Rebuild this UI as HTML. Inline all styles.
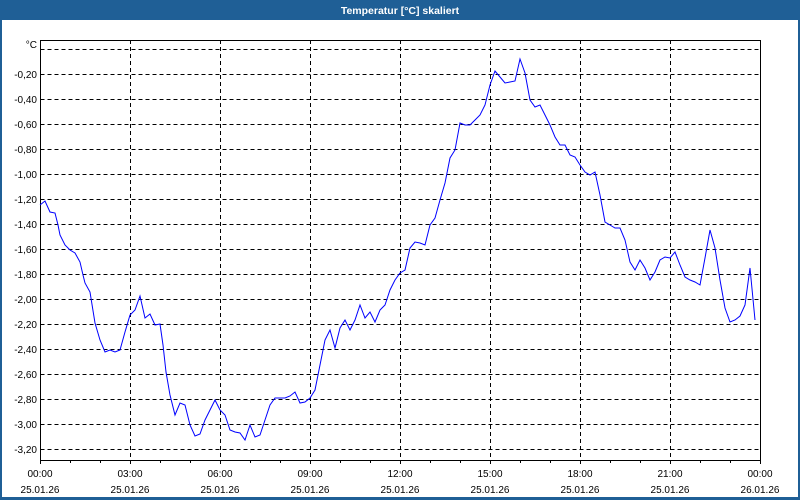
<!DOCTYPE html>
<html><head><meta charset="utf-8"><style>
html,body{margin:0;padding:0;width:800px;height:500px;overflow:hidden;background:#fff}
</style></head><body>
<svg width="800" height="500" xmlns="http://www.w3.org/2000/svg" font-family="Liberation Sans, sans-serif" font-size="10">
<rect x="0" y="0" width="800" height="500" fill="#1f5f96"/>
<rect x="2" y="20" width="796" height="477" fill="#fff"/>
<text x="400" y="14" text-anchor="middle" fill="#fff" font-weight="bold" font-size="10.5">Temperatur [°C] skaliert</text>
<g stroke="#000" stroke-width="1" stroke-dasharray="4,3" fill="none">
<path d="M40.5 49.5H760M40.5 74.5H760M40.5 99.5H760M40.5 124.5H760M40.5 149.5H760M40.5 174.5H760M40.5 199.5H760M40.5 224.5H760M40.5 249.5H760M40.5 274.5H760M40.5 299.5H760M40.5 324.5H760M40.5 349.5H760M40.5 374.5H760M40.5 399.5H760M40.5 424.5H760M40.5 449.5H760"/>
<path d="M130.5 40V460M220.5 40V460M310.5 40V460M400.5 40V460M490.5 40V460M580.5 40V460M670.5 40V460"/>
</g>
<path d="M40.5 40V460.5H760.5V40M40 40.5H760.5" stroke="#000" stroke-width="1" fill="none"/>
<path d="M40.5 460V464M70.5 460V463M100.5 460V463M130.5 460V464M160.5 460V463M190.5 460V463M220.5 460V464M250.5 460V463M280.5 460V463M310.5 460V464M340.5 460V463M370.5 460V463M400.5 460V464M430.5 460V463M460.5 460V463M490.5 460V464M520.5 460V463M550.5 460V463M580.5 460V464M610.5 460V463M640.5 460V463M670.5 460V464M700.5 460V463M730.5 460V463M760.5 460V464" stroke="#000"/>
<g text-anchor="end" fill="#000">
<text x="37" y="48">°C</text>
<text x="37" y="78">-0,20</text><text x="37" y="103">-0,40</text><text x="37" y="128">-0,60</text><text x="37" y="153">-0,80</text><text x="37" y="178">-1,00</text><text x="37" y="203">-1,20</text><text x="37" y="228">-1,40</text><text x="37" y="253">-1,60</text><text x="37" y="278">-1,80</text><text x="37" y="303">-2,00</text><text x="37" y="328">-2,20</text><text x="37" y="353">-2,40</text><text x="37" y="378">-2,60</text><text x="37" y="403">-2,80</text><text x="37" y="428">-3,00</text><text x="37" y="453">-3,20</text>
</g>
<g text-anchor="middle" fill="#000">
<text x="40" y="477">00:00</text><text x="130" y="477">03:00</text><text x="220" y="477">06:00</text><text x="310" y="477">09:00</text><text x="400" y="477">12:00</text><text x="490" y="477">15:00</text><text x="580" y="477">18:00</text><text x="670" y="477">21:00</text><text x="760" y="477">00:00</text>
<text x="40" y="493">25.01.26</text><text x="130" y="493">25.01.26</text><text x="220" y="493">25.01.26</text><text x="310" y="493">25.01.26</text><text x="400" y="493">25.01.26</text><text x="490" y="493">25.01.26</text><text x="580" y="493">25.01.26</text><text x="670" y="493">25.01.26</text><text x="760" y="493">26.01.26</text>
</g>
<polyline fill="none" stroke="#0000ff" stroke-width="1" points="40,205 45,201 50,212 55,213 58,225 60,235 65,245 70,250 75,253 80,262 83,275 85,283 90,292 95,323 100,340 105,352 110,350 115,352 120,350 125,332 130,315 135,310 140,296 145,318 150,314 155,325 160,324 163,345 166,372 170,395 175,415 180,403 185,405 190,425 195,436 200,434 205,420 210,410 215,400 220,410 225,415 230,430 235,432 240,433 245,440 250,425 255,437 260,435 265,420 270,405 275,398 280,398 285,398 290,396 295,392 300,403 305,402 310,398 315,390 320,365 325,340 330,330 335,348 340,328 345,320 350,330 355,320 360,305 365,318 370,312 375,322 380,310 385,305 390,290 395,280 400,273 405,270 410,248 415,242 420,243 425,245 430,225 435,218 440,200 445,183 448,168 450,158 455,150 460,123 465,125 470,125 475,120 480,115 485,105 490,85 495,71 500,77 505,83 510,82 515,81 520,59 525,73 530,100 535,107 540,105 545,115 550,125 555,137 560,145 565,145 570,155 575,157 580,165 585,172 590,175 595,172 600,195 605,222 610,225 615,228 620,228 625,240 630,262 635,270 640,260 645,268 650,280 655,272 660,260 665,257 670,258 675,252 680,265 685,277 690,280 695,282 700,285 705,258 710,230 715,248 720,280 725,308 730,322 735,320 740,316 745,305 750,268 755,320"/>
</svg>
</body></html>
